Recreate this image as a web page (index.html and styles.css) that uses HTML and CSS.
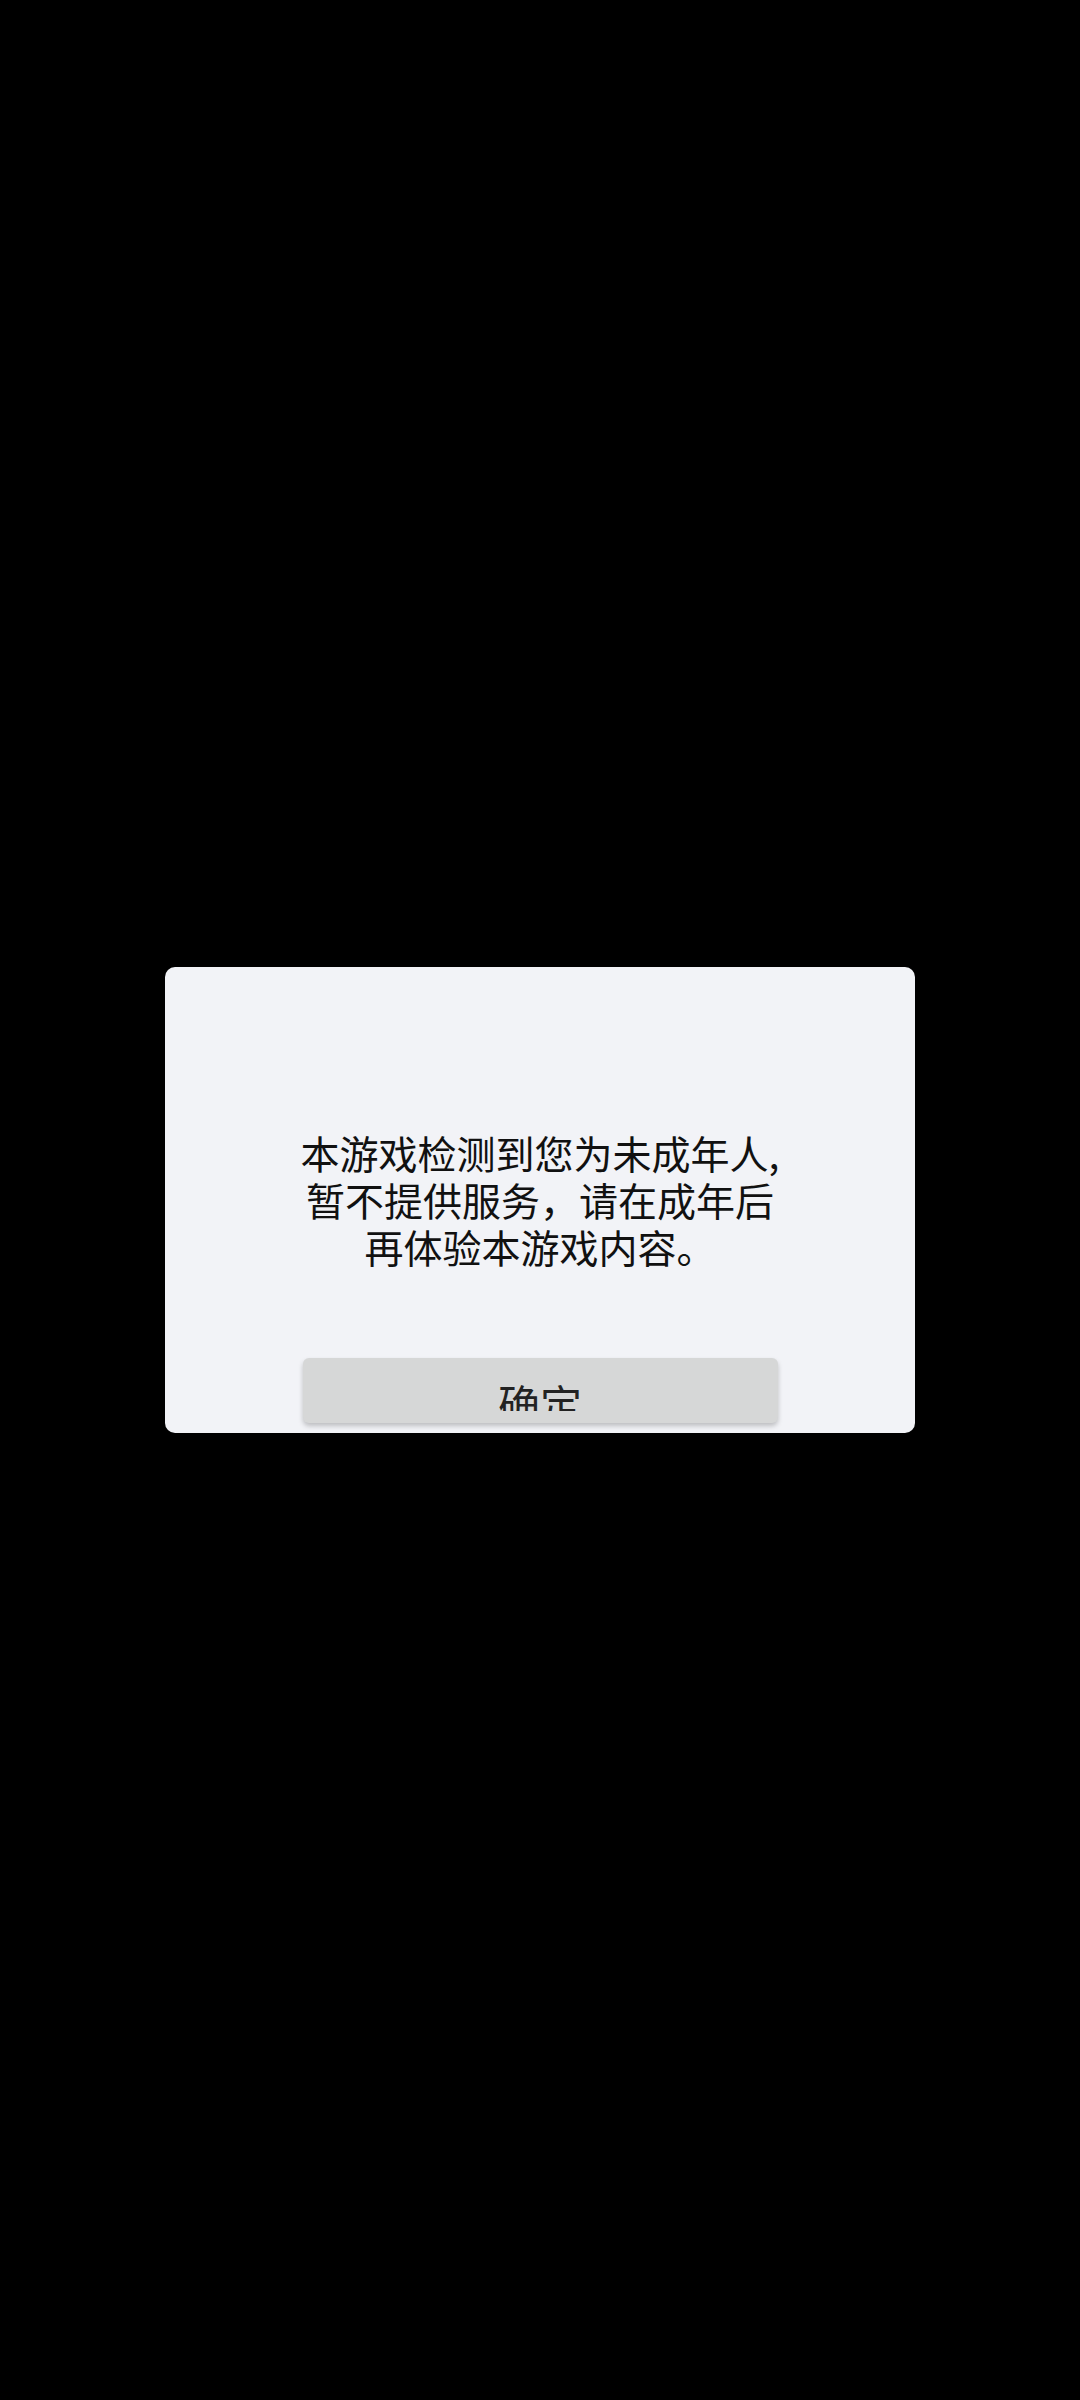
FILE: index.html
```html
<!DOCTYPE html>
<html lang="zh-CN">
<head>
  <meta charset="UTF-8" />
  <meta name="viewport" content="width=device-width, initial-scale=1.0" />
  <title>提示</title>
  <link rel="stylesheet" href="styles.css">
</head>
<body>
  <div class="overlay">
    <div class="dialog">
      <p class="message">本游戏检测到您为未成年人,<br>暂不提供服务，请在成年后<br>再体验本游戏内容。</p>
      <div class="btn-ok" role="button"><span class="btn-label">确定</span></div>
    </div>
  </div>
</body>
</html>
```

FILE: styles.css
```css
body {
  margin: 0;
  background-color: #000;
  font-family: "Noto Sans CJK SC", "Noto Sans", sans-serif;
}

.overlay {
  min-height: 100vh;
  display: flex;
  align-items: center;
  justify-content: center;
}

.dialog {
  width: 750px;
  box-sizing: border-box;
  background: #f2f3f7;
  border-radius: 10px;
  padding: 162px 0 10px;
  display: flex;
  flex-direction: column;
  align-items: center;
}

.message {
  margin: 0 0 88px;
  font-size: 39px;
  line-height: 47px;
  color: #111;
  text-align: center;
}

.btn-ok {
  width: 475px;
  height: 65px;
  background: #d6d7d7;
  border-radius: 6px;
  box-shadow: 0 3px 5px rgba(0,0,0,0.22);
  text-align: center;
  cursor: pointer;
}

/* text of the button is cut at the bottom, like in the original */
.btn-label {
  display: block;
  height: 53px;
  box-sizing: border-box;
  padding-top: 24px;
  overflow: hidden;
  font-size: 42px;
  line-height: 42px;
  color: #222;
}
```
